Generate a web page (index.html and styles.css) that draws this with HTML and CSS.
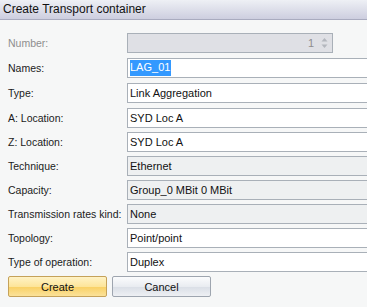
FILE: index.html
```html
<!DOCTYPE html>
<html lang="en">
<head>
  <meta charset="UTF-8">
  <title>Create Transport container</title>
  <link rel="stylesheet" href="styles.css">
</head>
<body>

  <!-- Title bar -->
  <div class="title-bar">Create Transport container</div>

  <!-- Form -->
  <div class="form">
    <div class="label disabled">Number:</div>
    <div class="field number-field">
      <span class="num">1</span>
      <span class="spin">
        <svg width="7" height="12" viewBox="0 0 7 12"><path d="M3.5 1 L6.5 4.5 L0.5 4.5 Z" fill="#b4b7be"/><path d="M3.5 11 L6.5 7.5 L0.5 7.5 Z" fill="#b4b7be"/></svg>
      </span>
    </div>

    <div class="label">Names:</div>
    <div class="field"><span class="selected">LAG_01</span></div>

    <div class="label">Type:</div>
    <div class="field">Link Aggregation</div>

    <div class="label">A: Location:</div>
    <div class="field">SYD Loc A</div>

    <div class="label">Z: Location:</div>
    <div class="field">SYD Loc A</div>

    <div class="label">Technique:</div>
    <div class="field readonly">Ethernet</div>

    <div class="label">Capacity:</div>
    <div class="field readonly">Group_0 MBit 0 MBit</div>

    <div class="label">Transmission rates kind:</div>
    <div class="field readonly">None</div>

    <div class="label">Topology:</div>
    <div class="field">Point/point</div>

    <div class="label">Type of operation:</div>
    <div class="field">Duplex</div>
  </div>

  <div class="buttons">
    <div class="btn btn-primary">Create</div>
    <div class="btn">Cancel</div>
  </div>

</body>
</html>
```

FILE: styles.css
```css
* { margin:0; padding:0; box-sizing:border-box; }
body { font-family:'Liberation Sans', Arial, sans-serif; font-size:10.5px; color:#1b1b1b; background:#f6f7f7; width:367px; height:307px; overflow:hidden; }

/* Title bar */
.title-bar { height:20px; padding:2px 3px 0; font-size:12px; color:#111; background:linear-gradient(#eef0f5, #cdcedf); border-bottom:1px solid #a9abbf; }

/* Form */
.form { display:grid; grid-template-columns:119px 240px; grid-template-rows:repeat(3, 25px) repeat(7, 24px); padding:13px 0 0 8px; }
.label { height:20px; display:flex; align-items:center; white-space:nowrap; }
.label.disabled { color:#8e8e8e; }
.field { height:20px; display:flex; align-items:center; padding-left:2px; background:#fff; border:1px solid #a9b0b8; border-right:none; white-space:nowrap; color:#111; font-size:11px; }
.field.readonly { background:#eef0f1; }
.number-field { width:206px; border-right:1px solid #a9b0b8; background:#dfe0e5; justify-content:flex-end; padding-right:4px; color:#8e8e8e; }
.number-field .num { margin-right:7px; }
.spin { display:flex; align-items:center; }
.selected { background:#3399ff; color:#fff; padding:0 1px 1px 0; line-height:15px; }

/* Buttons */
.buttons { display:flex; gap:5px; padding:0 0 0 8px; }
.btn { width:99px; height:21px; display:flex; align-items:center; justify-content:center; border:1px solid #9ea5af; border-radius:2px; font-size:11px; background:linear-gradient(#fbfcfd, #e9ecf1 50%, #d9dee6 51%, #eef0f4); color:#111; }
.btn-primary { border-color:#c5a25a; background:linear-gradient(#fff3c6, #fde59a 50%, #f9d063 51%, #fbe29a); }
```
